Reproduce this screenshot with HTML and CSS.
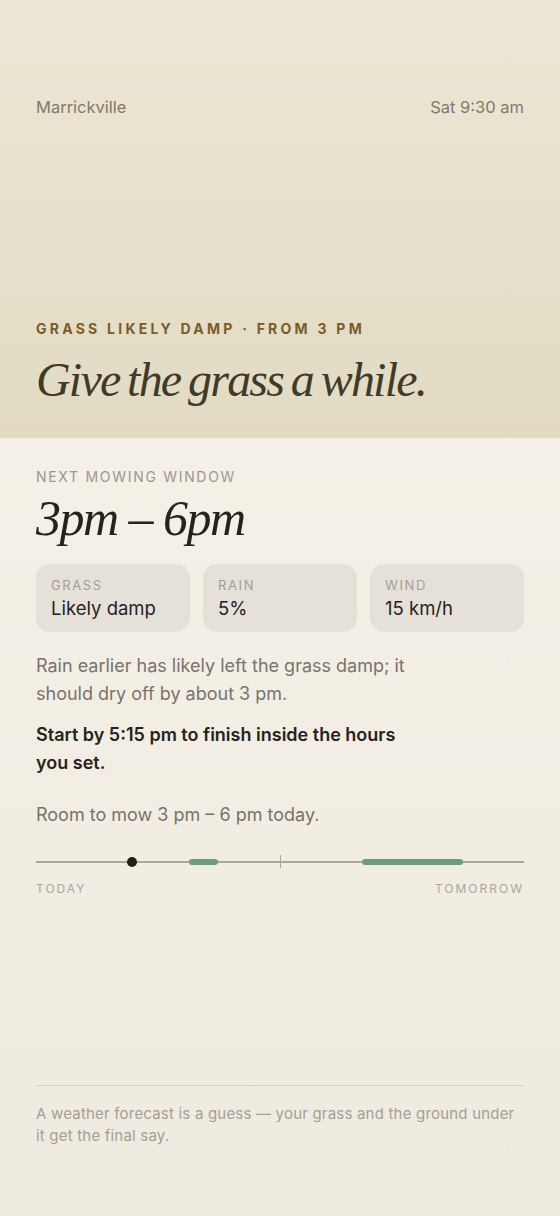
FILE: index.html
```html
<!DOCTYPE html>
<html lang="en">
<head>
  <meta charset="UTF-8" />
  <meta name="viewport" content="width=device-width, initial-scale=1.0"/>
  <title>Mowing Window</title>
  <link rel="stylesheet" href="styles.css">
</head>
<body>

  <header class="hero">
    <div class="meta">
      <span>Marrickville</span>
      <span>Sat 9:30 am</span>
    </div>
    <div class="hero-bottom">
      <p class="eyebrow">Grass likely damp · from 3 pm</p>
      <h1>Give the grass a while.</h1>
    </div>
  </header>

  <main class="content">
    <p class="label">Next mowing window</p>
    <h2 class="window">3pm – 6pm</h2>

    <div class="stats">
      <div class="stat">
        <span class="stat-label">Grass</span>
        <span class="stat-value">Likely damp</span>
      </div>
      <div class="stat">
        <span class="stat-label">Rain</span>
        <span class="stat-value">5%</span>
      </div>
      <div class="stat">
        <span class="stat-label">Wind</span>
        <span class="stat-value">15 km/h</span>
      </div>
    </div>

    <p class="note">Rain earlier has likely left the grass damp; it should dry off by about 3 pm.</p>
    <p class="note strong">Start by 5:15 pm to finish inside the hours you set.</p>
    <p class="note room">Room to mow 3 pm – 6 pm today.</p>

    <div class="timeline">
      <div class="track">
        <span class="now" style="left: 19.7%"></span>
        <span class="slot" style="left: 31.35%; width: 5.9%"></span>
        <span class="midnight" style="left: 50%"></span>
        <span class="slot" style="left: 66.8%; width: 20.7%"></span>
      </div>
      <div class="track-labels">
        <span>Today</span>
        <span>Tomorrow</span>
      </div>
    </div>
  </main>

  <footer class="footer">
    <p>A weather forecast is a guess — your grass and the ground under it get the final say.</p>
  </footer>

</body>
</html>
```

FILE: styles.css
```css
* {
  box-sizing: border-box;
}

body {
  font-family: 'Inter', 'Liberation Sans', sans-serif;
  margin: 0;
  min-height: 1216px;
  display: flex;
  flex-direction: column;
  background: linear-gradient(to bottom, #f7f4ec, #efeadf);
  color: #2a2620;
}

p {
  margin: 0;
}

.hero {
  height: 438px;
  padding: 96px 36px 28px;
  display: flex;
  flex-direction: column;
  justify-content: space-between;
  background: linear-gradient(to bottom, #ece6d5, #e2dbc2);
}

.meta {
  display: flex;
  justify-content: space-between;
  font-size: 16.5px;
  line-height: 22px;
  color: #7f7a6a;
}

.eyebrow {
  font-size: 14px;
  line-height: 18px;
  font-weight: 700;
  letter-spacing: 3.25px;
  text-transform: uppercase;
  color: #7b5b27;
}

.hero h1 {
  font-family: 'Liberation Serif', serif;
  font-style: italic;
  font-weight: 400;
  font-size: 48px;
  line-height: 60px;
  letter-spacing: -1.8px;
  word-spacing: -2.5px;
  margin: 12px 0 0;
  color: #403b29;
}

.content {
  padding: 30px 36px 0;
}

.label {
  font-size: 14px;
  line-height: 18px;
  letter-spacing: 1.7px;
  text-transform: uppercase;
  color: #9b978d;
}

.window {
  font-family: 'Liberation Serif', serif;
  font-style: italic;
  font-weight: 400;
  font-size: 50px;
  line-height: 60px;
  letter-spacing: -1.5px;
  margin: 2px 0 0;
  color: #26221c;
}

.stats {
  display: grid;
  grid-template-columns: repeat(3, 1fr);
  gap: 13px;
  margin-top: 16px;
}

.stat {
  background-color: #e6e1d8;
  border-radius: 14px;
  padding: 13px 15px 12px;
  display: flex;
  flex-direction: column;
  gap: 3px;
}

.stat-label {
  font-size: 13px;
  line-height: 16px;
  letter-spacing: 1.6px;
  text-transform: uppercase;
  color: #a39e95;
}

.stat-value {
  font-size: 18.5px;
  line-height: 24px;
  color: #26221c;
}

.note {
  font-size: 18px;
  line-height: 28px;
  color: #78736b;
  max-width: 380px;
  margin-top: 20px;
}

.note.strong {
  font-weight: 600;
  color: #26221c;
  margin-top: 13px;
}

.note.room {
  margin-top: 24px;
}

.timeline {
  margin-top: 32px;
}

.track {
  position: relative;
  height: 2px;
  background-color: #aca797;
}

.now {
  position: absolute;
  top: -4px;
  width: 10px;
  height: 10px;
  margin-left: -5px;
  border-radius: 50%;
  background-color: #221f1a;
}

.slot {
  position: absolute;
  top: -2px;
  height: 6px;
  border-radius: 3px;
  background-color: #6a9e74;
}

.midnight {
  position: absolute;
  top: -6px;
  width: 1px;
  height: 13px;
  background-color: #aca797;
}

.track-labels {
  display: flex;
  justify-content: space-between;
  margin-top: 18px;
  font-size: 12px;
  line-height: 16px;
  letter-spacing: 2px;
  text-transform: uppercase;
  color: #aaa69c;
}

.footer {
  margin: auto 36px 0;
  padding: 17px 0 69px;
  border-top: 1px solid #d6d0c4;
}

.footer p {
  font-size: 15px;
  line-height: 22px;
  letter-spacing: 0.2px;
  color: #a39f95;
}
```
